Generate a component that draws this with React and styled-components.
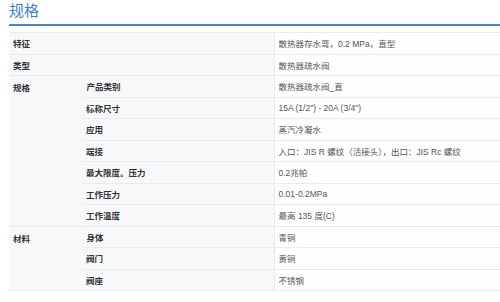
import React from "react";
import styled, { createGlobalStyle } from "styled-components";

const GlobalStyle = createGlobalStyle`
  html, body {
    margin: 0;
    padding: 0;
    background: #ffffff;
    overflow: hidden;
  }
  body {
    font-family: "Liberation Sans", "Noto Sans CJK SC", Arial, sans-serif;
  }
`;

const Page = styled.div`
  width: 500px;
  height: 302px;
  padding: 0 0 0 9px;
  box-sizing: border-box;
  overflow: hidden;
`;

const Heading = styled.h2`
  margin: 0;
  padding-top: 1px;
  height: 23px;
  font-size: 15px;
  line-height: 18px;
  font-weight: normal;
  color: #3b7fbf;
  border-bottom: 2px solid #4a87bd;
  width: 520px;
  font-family: "Noto Sans CJK SC", sans-serif;
`;

const SpecTable = styled.table`
  margin-top: 6px;
  width: 520px;
  border-collapse: collapse;
  table-layout: fixed;
  font-size: 8.5px;
  font-family: "Liberation Sans", "Noto Sans CJK SC", sans-serif;
`;

const Cell = styled.td`
  height: 21.5px;
  padding: 0 4px;
  box-sizing: border-box;
  vertical-align: middle;
  border-top: 1px solid #ebebeb;
  border-bottom: 1px solid #ebebeb;
  border-left: 1px solid ${(p) => (p.$value ? "#e6e8eb" : "#f3f3f3")};
  background: ${(p) => (p.$value ? "#fefefe" : "#f7f8fa")};
  color: ${(p) => (p.$value ? "#555" : "#333")};
  font-weight: ${(p) => (p.$value ? "normal" : "bold")};
  white-space: nowrap;
  &:first-child {
    border-left: none;
  }
`;

const TopCell = styled(Cell)`
  vertical-align: top;
  padding-top: 5px;
`;

const groups = [
  { label: "特征", value: "散热器存水弯，0.2 MPa，直型" },
  { label: "类型", value: "散热器疏水阀" },
  {
    label: "规格",
    rows: [
      ["产品类别", "散热器疏水阀_直"],
      ["标称尺寸", "15A (1/2\") - 20A (3/4\")"],
      ["应用", "蒸汽冷凝水"],
      ["端接", "入口：JIS R 螺纹（活接头），出口：JIS Rc 螺纹"],
      ["最大限度。压力", "0.2兆帕"],
      ["工作压力", "0.01-0.2MPa"],
      ["工作温度", "最高 135 度(C)"],
    ],
  },
  {
    label: "材料",
    rows: [
      ["身体", "青铜"],
      ["阀门", "黄铜"],
      ["阀座", "不锈钢"],
    ],
  },
];

export default function App() {
  return (
    <Page>
      <GlobalStyle />
      <Heading>规格</Heading>
      <SpecTable>
        <colgroup>
          <col style={{ width: 73 }} />
          <col style={{ width: 192 }} />
          <col />
        </colgroup>
        <tbody>
          {groups.map((g) =>
            g.rows ? (
              g.rows.map((r, i) => (
                <tr key={g.label + r[0]}>
                  {i === 0 && <TopCell rowSpan={g.rows.length}>{g.label}</TopCell>}
                  <Cell>{r[0]}</Cell>
                  <Cell $value>{r[1]}</Cell>
                </tr>
              ))
            ) : (
              <tr key={g.label}>
                <Cell colSpan={2}>{g.label}</Cell>
                <Cell $value>{g.value}</Cell>
              </tr>
            )
          )}
        </tbody>
      </SpecTable>
    </Page>
  );
}
